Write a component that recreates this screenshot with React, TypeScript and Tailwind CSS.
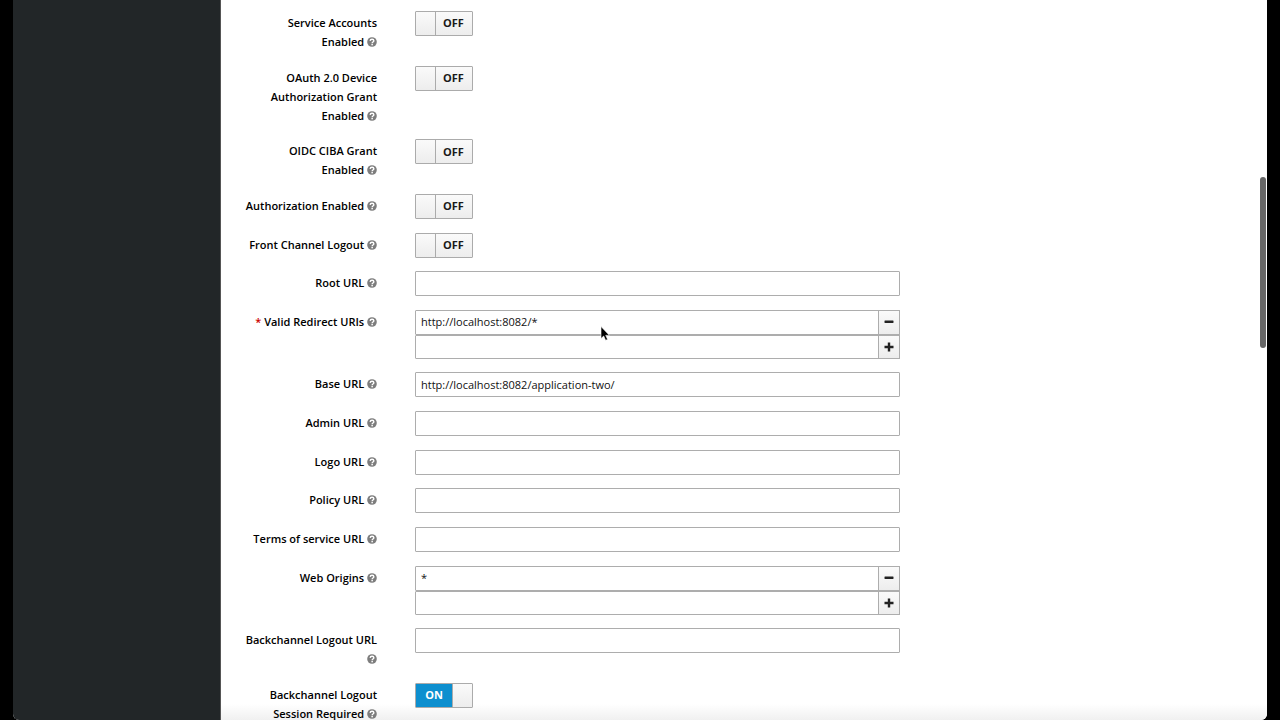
import { useId, useState } from "react";
import type { ReactNode } from "react";

function HelpIcon() {
  return (
    <svg viewBox="0 0 20 20" className="inline-block size-[10px] align-[-1px]" aria-hidden="true">
      <circle cx="10" cy="10" r="9.6" fill="#7d7d7d" />
      <path
        d="M6.2 7.8C6.5 5.6 8 4.6 10.1 4.6c2.2 0 3.6 1.1 3.6 2.9 0 2.5-3.4 2.4-3.4 4.9"
        fill="none"
        stroke="#fff"
        strokeWidth="2.8"
      />
      <rect x="8.8" y="13.8" width="3" height="2.8" fill="#fff" />
    </svg>
  );
}

type RowProps = {
  label: string;
  htmlFor: string;
  required?: boolean;
  last?: boolean;
  children: ReactNode;
};

function Row({ label, htmlFor, required, last, children }: RowProps) {
  return (
    <div className={last ? "flex h-9 items-start" : "flex items-start"}>
      <label
        htmlFor={htmlFor}
        className="ml-[23px] block w-[133px] shrink-0 pt-[2px] pb-px text-right text-[11px] leading-[19px] font-semibold"
      >
        {required && <span className="text-[#c00]">* </span>}
        {label} <HelpIcon />
      </label>
      <div className="ml-[38px] min-w-0 flex-1 pr-[367px]">{children}</div>
    </div>
  );
}

function ToggleRow({ label, on = false, last }: { label: string; on?: boolean; last?: boolean }) {
  const id = useId();
  const [enabled, setEnabled] = useState(on);
  return (
    <Row label={label} htmlFor={id} last={last}>
      <button
        id={id}
        type="button"
        role="switch"
        aria-checked={enabled}
        onClick={() => setEnabled(!enabled)}
        className="flex h-[25px] w-[58px] overflow-hidden rounded-[1px] border border-[#ababab] bg-linear-to-b from-[#fafafa] to-[#ededed] text-[11px] font-bold"
      >
        {enabled ? (
          <>
            <span className="flex h-full flex-1 items-center justify-center bg-[#0d8fcf] text-white">ON</span>
            <span className="h-full w-5 border-l border-[#ababab]" />
          </>
        ) : (
          <>
            <span className="h-full w-5 border-r border-[#ababab]" />
            <span className="flex h-full flex-1 items-center justify-center pr-px text-[#1a1a1a]">OFF</span>
          </>
        )}
      </button>
    </Row>
  );
}

const inputClass =
  "block w-full min-w-0 rounded-[1px] border border-[#adadad] bg-white px-[5px] text-[11px] text-[#111] outline-none";

function TextRow({ label, value = "" }: { label: string; value?: string }) {
  const id = useId();
  return (
    <Row label={label} htmlFor={id}>
      <input id={id} type="text" defaultValue={value} className={`h-[25px] ${inputClass}`} />
    </Row>
  );
}

function ListRow({ label, value, required }: { label: string; value: string; required?: boolean }) {
  const id = useId();
  const buttonClass =
    "-ml-px flex w-[22px] shrink-0 items-center justify-center border border-[#adadad] bg-linear-to-b from-[#fafafa] to-[#ededed]";
  return (
    <Row label={label} htmlFor={id} required={required}>
      <div className="flex h-[25px]">
        <input id={id} type="text" defaultValue={value} className={inputClass} />
        <button type="button" aria-label={`Remove from ${label}`} className={buttonClass}>
          <svg viewBox="0 0 10 10" className="size-[10px]" aria-hidden="true">
            <rect x="0.5" y="3.6" width="9" height="2.4" rx="0.4" fill="#222" />
          </svg>
        </button>
      </div>
      <div className="flex h-6">
        <input type="text" aria-label={`New ${label}`} defaultValue="" className={inputClass} />
        <button type="button" aria-label={`Add to ${label}`} className={buttonClass}>
          <svg viewBox="0 0 10 10" className="size-[10px]" aria-hidden="true">
            <path d="M5 0.5v9M0.5 5h9" stroke="#222" strokeWidth="2.4" />
          </svg>
        </button>
      </div>
    </Row>
  );
}

export default function App() {
  return (
    <div className="h-screen overflow-hidden bg-black px-[13px] font-['Open_Sans','Noto_Sans',sans-serif] text-black">
      <div className="relative flex h-full overflow-hidden rounded-b-[6px] bg-white">
        <aside className="w-[208px] shrink-0 border-r border-[#555] bg-[#222628]" />
        <main className="min-w-0 flex-1 bg-linear-to-t from-[#f0f0f0] to-white to-[16px]">
          <form className="flex h-full flex-col justify-between pt-[11px] pb-px">
            <ToggleRow label="Service Accounts Enabled" />
            <ToggleRow label="OAuth 2.0 Device Authorization Grant Enabled" />
            <ToggleRow label="OIDC CIBA Grant Enabled" />
            <ToggleRow label="Authorization Enabled" />
            <ToggleRow label="Front Channel Logout" />
            <TextRow label="Root URL" />
            <ListRow label="Valid Redirect URIs" value="http://localhost:8082/*" required />
            <TextRow label="Base URL" value="http://localhost:8082/application-two/" />
            <TextRow label="Admin URL" />
            <TextRow label="Logo URL" />
            <TextRow label="Policy URL" />
            <TextRow label="Terms of service URL" />
            <ListRow label="Web Origins" value="*" />
            <TextRow label="Backchannel Logout URL" />
            <ToggleRow label="Backchannel Logout Session Required" on last />
          </form>
        </main>
        <div className="absolute top-[177px] right-[1px] h-[171px] w-[6px] rounded-full bg-[#666]" />
        <svg viewBox="0 0 10 16" className="absolute top-[326px] left-[587px] h-4 w-[10px]" aria-hidden="true">
          <path d="M1 0.5v12l2.7-2.5 1.9 4.3 2-0.9-1.9-4.1h3.6z" fill="#000" stroke="#fff" strokeWidth="0.6" />
        </svg>
      </div>
    </div>
  );
}
